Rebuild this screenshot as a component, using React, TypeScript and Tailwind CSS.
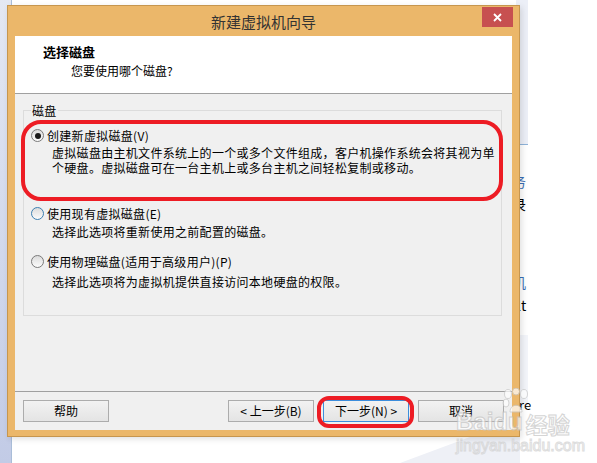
import React from 'react';

// 单选按钮
const Radio = ({ checked, focus }: { checked?: boolean; focus?: boolean }) => (
  <span
    className={`flex h-[13px] w-[13px] shrink-0 items-center justify-center rounded-full border bg-linear-to-b from-[#dcdcdc] to-[#fbfbfb] ${
      focus ? 'border-[#3c7fb1]' : 'border-[#7a7a7a]'
    }`}
  >
    {checked && <span className="h-[6px] w-[6px] rounded-full bg-[#1a1a1a]" />}
  </span>
);

const Btn = ({ label, primary }: { label: string; primary?: boolean }) => (
  <div
    className={`flex h-[22px] w-[86px] items-center justify-center border bg-linear-to-b from-[#f2f2f2] to-[#e4e4e4] text-[12px] leading-none text-black ${
      primary ? 'border-[#3c8ddc]' : 'border-[#acacac]'
    }`}
  >
    {label}
  </div>
);

export default function App() {
  return (
    <div className="relative h-[463px] w-[597px] overflow-hidden bg-white font-['Microsoft_YaHei','Noto_Sans_CJK_SC',sans-serif] text-[12px] text-black">
      {/* 背后的桌面 */}
      <div className="absolute left-0 top-0 h-[463px] w-[12px] border-r border-[#a9bdd8] bg-linear-to-b from-[#e4e8f3] to-[#c2cbe6]" />
      <div className="absolute left-[516px] top-0 h-[145px] w-[12px] border-b border-[#8fb3d9] bg-[#eceff7]" />
      <div className="absolute left-[516px] top-[335px] h-[70px] w-[12px] bg-[#f3f5fa]" />
      <div className="absolute left-[512px] top-[174px] text-[14px] leading-none text-[#3a6fb5]">务</div>
      <div className="absolute left-[512px] top-[197px] text-[14px] leading-none text-black">录</div>
      <div className="absolute left-[512px] top-[275px] text-[14px] leading-none text-[#3a6fb5]">机</div>
      <div className="absolute left-[517px] top-[298px] text-[14px] leading-none text-black">lt</div>
      <div className="absolute left-[519px] top-[398px] text-[13px] leading-none text-black">re</div>
      <svg className="absolute left-0 top-[437px]" width="597" height="26">
        <polygon points="400,26 470,0 520,0 520,26" fill="#eef0f6" />
      </svg>

      {/* 向导窗口 */}
      <div className="absolute left-[7px] top-[5px] flex h-[432px] w-[513px] flex-col border border-[#c6964f] bg-[#ebb76a] shadow-[2px_2px_6px_rgba(0,0,0,0.12)]">
        <div className="grid h-[30px] grid-cols-[1fr_auto_1fr]">
          <div />
          <div className="self-center text-[15px] leading-none text-[#333]">新建虚拟机向导</div>
          <div className="flex justify-end pr-[6px] pt-[1px]">
            <div className="flex h-[20px] w-[31px] items-center justify-center bg-[#c75050]">
              <svg width="9" height="9" viewBox="0 0 9 9">
                <path d="M1 1 L8 8 M8 1 L1 8" stroke="#fff" strokeWidth="1.8" />
              </svg>
            </div>
          </div>
        </div>

        <div className="mx-[7px] flex h-[394px] flex-col bg-[#f0f0f0]">
          {/* 标题区 */}
          <div className="h-[57px] bg-white pl-[28px] pt-[8px]">
            <div className="text-[13px] font-bold leading-[15px]">选择磁盘</div>
            <div className="ml-[28px] mt-[4px] leading-[15px]">您要使用哪个磁盘?</div>
          </div>
          <div className="h-px bg-[#a0a0a0]" />

          {/* 选项 */}
          <div className="flex-1 pl-[8px] pr-[10px] pt-[16px]">
            <div className="h-[206px] border border-[#dcdcdc] pl-[7px] tracking-[0.3px]">
              <div className="-mt-[8px] w-fit bg-[#f0f0f0] px-px leading-[15px]">磁盘</div>

              <div className="mt-[10px] flex h-[15px] items-center gap-[3px]">
                <Radio checked />
                <span>创建新虚拟磁盘(V)</span>
              </div>
              <div className="mt-[2px] flex flex-col pl-[21px] leading-[15px]">
                <span className="h-[15px]">虚拟磁盘由主机文件系统上的一个或多个文件组成，客户机操作系统会将其视为单</span>
                <span className="h-[15px]">个硬盘。虚拟磁盘可在一台主机上或多台主机之间轻松复制或移动。</span>
              </div>

              <div className="mt-[31px] flex h-[15px] items-center gap-[3px]">
                <Radio focus />
                <span>使用现有虚拟磁盘(E)</span>
              </div>
              <div className="mt-[3px] pl-[21px] leading-[15px]">选择此选项将重新使用之前配置的磁盘。</div>

              <div className="mt-[15px] flex h-[15px] items-center gap-[3px]">
                <Radio />
                <span>使用物理磁盘(适用于高级用户)(P)</span>
              </div>
              <div className="mt-[5px] pl-[21px] leading-[15px]">选择此选项将为虚拟机提供直接访问本地硬盘的权限。</div>
            </div>
          </div>

          <div className="h-px bg-[#a0a0a0]" />
          {/* 按钮 */}
          <div className="flex h-[38px] px-[8px] pt-[8px]">
            <Btn label="帮助" />
            <div className="ml-auto flex gap-[9px]">
              <Btn label="< 上一步(B)" />
              <Btn label="下一步(N) >" primary />
              <Btn label="取消" />
            </div>
          </div>
        </div>
      </div>

      {/* 红色标注 */}
      <div className="pointer-events-none absolute left-[21px] top-[120px] h-[81px] w-[482px] rounded-[20px] border-[4px] border-[#ed1c24]" />
      <div className="pointer-events-none absolute left-[317px] top-[396px] h-[32px] w-[97px] rounded-[12px] border-[4px] border-[#ed1c24]" />

      {/* 水印 */}
      <div className="pointer-events-none absolute left-[456px] top-[388px] opacity-70">
        <svg className="absolute left-[46px] top-0" width="30" height="26" viewBox="0 0 30 26">
          <g fill="#ffffff" stroke="#c8c8c8" strokeWidth="1">
            <ellipse cx="6" cy="6" rx="3.5" ry="4.5" />
            <ellipse cx="14" cy="3.5" rx="3.5" ry="3.5" />
            <ellipse cx="22" cy="6" rx="3.5" ry="4.5" />
            <ellipse cx="4" cy="15" rx="3" ry="4" />
            <path d="M8 24 C8 15 20 15 20 24 Z" />
          </g>
        </svg>
        <div className="flex items-end pt-[22px] leading-none">
          <span className="font-['Liberation_Sans',sans-serif] text-[24px] font-bold text-white [-webkit-text-stroke:1px_#c4c4c4]">Baidu</span>
          <span className="ml-[3px] text-[22px] font-bold text-white [-webkit-text-stroke:1px_#c4c4c4]">经验</span>
        </div>
        <div className="mt-[4px] font-['Liberation_Sans',sans-serif] text-[16px] leading-none text-white [-webkit-text-stroke:1px_#cfcfcf]">jingyan.baidu.com</div>
      </div>
    </div>
  );
}
